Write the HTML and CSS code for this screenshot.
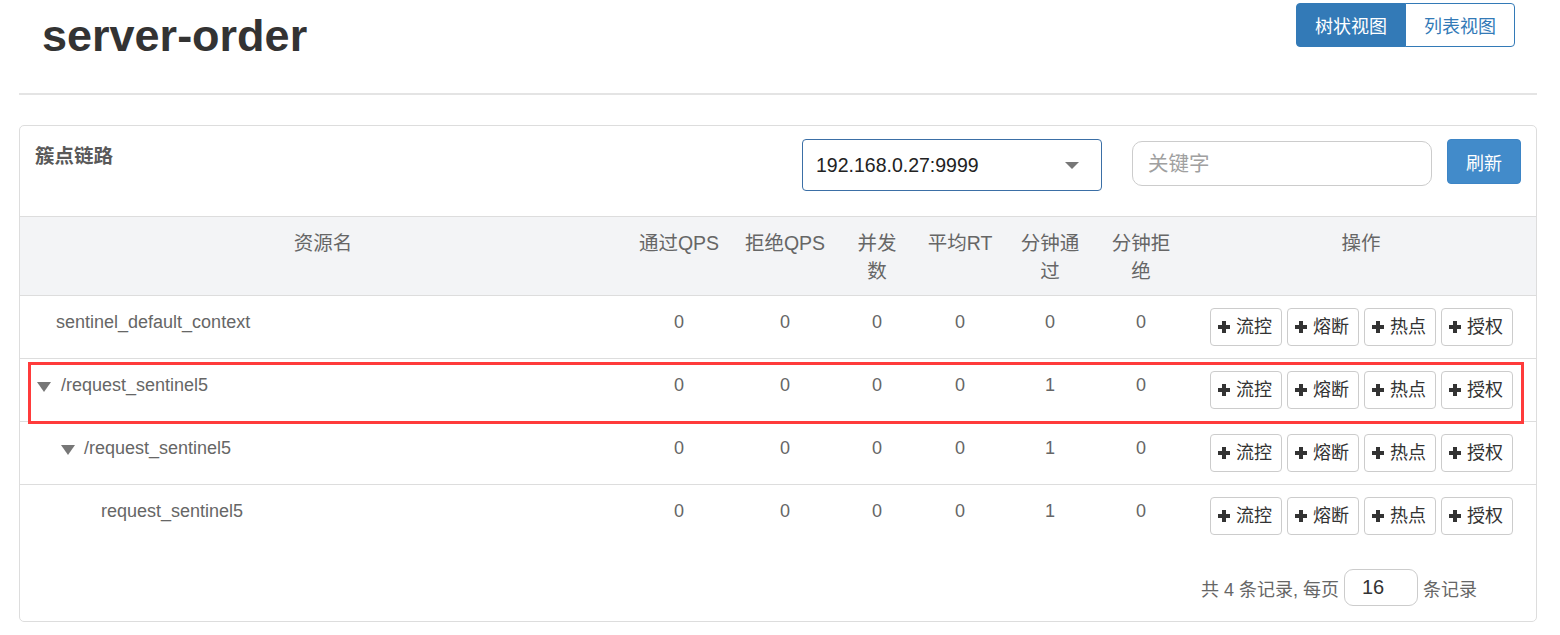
FILE: index.html
```html
<!DOCTYPE html>
<html lang="zh">
<head>
<meta charset="utf-8">
<title>server-order</title>
<link rel="stylesheet" href="styles.css">
</head>
<body>
<div class="page">
  <header class="top">
    <h1 class="app-title">server-order</h1>
    <div class="view-switch">
      <button class="view-btn active">树状视图</button>
      <button class="view-btn">列表视图</button>
    </div>
  </header>
  <div class="divider"></div>

  <section class="panel">
    <div class="panel-head">
      <div class="panel-title">簇点链路</div>
      <div class="machine-select">
        <span class="select-value">192.168.0.27:9999</span>
        <span class="caret"></span>
      </div>
      <input class="search" type="text" placeholder="关键字">
      <button class="refresh">刷新</button>
    </div>

    <table class="grid">
      <colgroup>
        <col class="c-name"><col class="c-pass"><col class="c-block"><col class="c-conc"><col class="c-rt"><col class="c-minp"><col class="c-minb"><col class="c-ops">
      </colgroup>
      <thead>
        <tr>
          <th>资源名</th>
          <th>通过QPS</th>
          <th>拒绝QPS</th>
          <th>并发<br>数</th>
          <th>平均RT</th>
          <th>分钟通<br>过</th>
          <th>分钟拒<br>绝</th>
          <th>操作</th>
        </tr>
      </thead>
      <tbody>
        <tr>
          <td class="name lvl-a">sentinel_default_context</td>
          <td>0</td><td>0</td><td>0</td><td>0</td><td>0</td><td>0</td>
          <td class="ops">
            <button class="op"><svg class="plus" viewBox="0 0 12 12"><rect x="4" y="0" width="4" height="12"/><rect x="0" y="4" width="12" height="4"/></svg>流控</button>
            <button class="op"><svg class="plus" viewBox="0 0 12 12"><rect x="4" y="0" width="4" height="12"/><rect x="0" y="4" width="12" height="4"/></svg>熔断</button>
            <button class="op"><svg class="plus" viewBox="0 0 12 12"><rect x="4" y="0" width="4" height="12"/><rect x="0" y="4" width="12" height="4"/></svg>热点</button>
            <button class="op"><svg class="plus" viewBox="0 0 12 12"><rect x="4" y="0" width="4" height="12"/><rect x="0" y="4" width="12" height="4"/></svg>授权</button>
          </td>
        </tr>
        <tr>
          <td class="name lvl-b"><span class="tri"></span>/request_sentinel5</td>
          <td>0</td><td>0</td><td>0</td><td>0</td><td>1</td><td>0</td>
          <td class="ops">
            <button class="op"><svg class="plus" viewBox="0 0 12 12"><rect x="4" y="0" width="4" height="12"/><rect x="0" y="4" width="12" height="4"/></svg>流控</button>
            <button class="op"><svg class="plus" viewBox="0 0 12 12"><rect x="4" y="0" width="4" height="12"/><rect x="0" y="4" width="12" height="4"/></svg>熔断</button>
            <button class="op"><svg class="plus" viewBox="0 0 12 12"><rect x="4" y="0" width="4" height="12"/><rect x="0" y="4" width="12" height="4"/></svg>热点</button>
            <button class="op"><svg class="plus" viewBox="0 0 12 12"><rect x="4" y="0" width="4" height="12"/><rect x="0" y="4" width="12" height="4"/></svg>授权</button>
          </td>
        </tr>
        <tr>
          <td class="name lvl-c"><span class="tri"></span>/request_sentinel5</td>
          <td>0</td><td>0</td><td>0</td><td>0</td><td>1</td><td>0</td>
          <td class="ops">
            <button class="op"><svg class="plus" viewBox="0 0 12 12"><rect x="4" y="0" width="4" height="12"/><rect x="0" y="4" width="12" height="4"/></svg>流控</button>
            <button class="op"><svg class="plus" viewBox="0 0 12 12"><rect x="4" y="0" width="4" height="12"/><rect x="0" y="4" width="12" height="4"/></svg>熔断</button>
            <button class="op"><svg class="plus" viewBox="0 0 12 12"><rect x="4" y="0" width="4" height="12"/><rect x="0" y="4" width="12" height="4"/></svg>热点</button>
            <button class="op"><svg class="plus" viewBox="0 0 12 12"><rect x="4" y="0" width="4" height="12"/><rect x="0" y="4" width="12" height="4"/></svg>授权</button>
          </td>
        </tr>
        <tr>
          <td class="name lvl-d">request_sentinel5</td>
          <td>0</td><td>0</td><td>0</td><td>0</td><td>1</td><td>0</td>
          <td class="ops">
            <button class="op"><svg class="plus" viewBox="0 0 12 12"><rect x="4" y="0" width="4" height="12"/><rect x="0" y="4" width="12" height="4"/></svg>流控</button>
            <button class="op"><svg class="plus" viewBox="0 0 12 12"><rect x="4" y="0" width="4" height="12"/><rect x="0" y="4" width="12" height="4"/></svg>熔断</button>
            <button class="op"><svg class="plus" viewBox="0 0 12 12"><rect x="4" y="0" width="4" height="12"/><rect x="0" y="4" width="12" height="4"/></svg>热点</button>
            <button class="op"><svg class="plus" viewBox="0 0 12 12"><rect x="4" y="0" width="4" height="12"/><rect x="0" y="4" width="12" height="4"/></svg>授权</button>
          </td>
        </tr>
      </tbody>
    </table>

    <div class="pager">
      <span>共 4 条记录, 每页</span>
      <input class="page-size" type="text" value="16">
      <span>条记录</span>
    </div>
  </section>

  <div class="highlight"></div>
</div>
</body>
</html>
```

FILE: styles.css
```css
* { box-sizing: border-box; }

html, body {
  margin: 0;
  padding: 0;
  background: #fff;
}

body {
  font-family: "Liberation Sans", "Noto Sans CJK SC", sans-serif;
  font-size: 18px;
  color: #333;
}

.page {
  position: relative;
  width: 1518px;
  margin-left: 19px;
}

.top {
  display: flex;
  justify-content: space-between;
  align-items: flex-start;
  height: 93px;
  padding: 0 22px 0 23px;
}

.app-title {
  margin: 11px 0 0 0;
  font-size: 45px;
  line-height: 49px;
  font-weight: bold;
  color: #333;
}

.view-switch {
  display: flex;
  margin-top: 3px;
}

.view-btn {
  height: 44px;
  width: 110px;
  padding: 0;
  font-family: inherit;
  font-size: 18px;
  color: #337ab7;
  background: #fff;
  border: 1px solid #337ab7;
  border-radius: 0 4px 4px 0;
  margin-left: -1px;
}

.view-btn.active {
  color: #fff;
  background: #337ab7;
  border-radius: 4px 0 0 4px;
  margin-left: 0;
}

.divider {
  height: 2px;
  background: #e4e4e4;
}

.panel {
  margin-top: 30px;
  border: 1px solid #dddddd;
  border-radius: 5px;
  height: 497px;
}

.panel-head {
  display: flex;
  align-items: flex-start;
  height: 90px;
  padding: 13px 15px 0 15px;
}

.panel-title {
  flex: 1;
  font-weight: bold;
  font-size: 19.5px;
  line-height: 28px;
  color: #595959;
  margin-top: 3px;
}

.machine-select {
  width: 300px;
  height: 52px;
  border: 1px solid #3b6fa6;
  border-radius: 4px;
  display: flex;
  align-items: center;
  justify-content: space-between;
  padding: 0 22px 0 13px;
  margin-right: 30px;
}

.select-value {
  font-size: 19.5px;
  color: #222;
}

.caret {
  width: 0;
  height: 0;
  border-left: 7px solid transparent;
  border-right: 7px solid transparent;
  border-top: 7px solid #777;
}

.search {
  width: 300px;
  height: 45px;
  margin-top: 2px;
  margin-right: 15px;
  border: 1px solid #cccccc;
  border-radius: 10px;
  padding: 0 15px;
  font-family: inherit;
  font-size: 20.5px;
  color: #333;
  outline: none;
}

.search::placeholder { color: #a0a0a0; }

.refresh {
  width: 74px;
  height: 45px;
  border: 1px solid #3d85c6;
  border-radius: 4px;
  background: #428bca;
  color: #fff;
  font-family: inherit;
  font-size: 18px;
  padding: 0;
}

.grid {
  width: 1516px;
  border-collapse: collapse;
  table-layout: fixed;
}

.c-name { width: 606px; }
.c-pass { width: 106px; }
.c-block { width: 106px; }
.c-conc { width: 78px; }
.c-rt { width: 88px; }
.c-minp { width: 92px; }
.c-minb { width: 90px; }
.c-ops { width: 350px; }

.grid th {
  background: #f3f4f6;
  border-top: 1px solid #dddddd;
  border-bottom: 1px solid #dddddd;
  font-weight: normal;
  color: #666;
  font-size: 19.5px;
  line-height: 28px;
  padding: 12px 0 10px;
  text-align: center;
  vertical-align: top;
  white-space: nowrap;
}

.grid td {
  padding: 12px 0;
  line-height: 28px;
  font-size: 18px;
  color: #666;
  text-align: center;
  vertical-align: top;
  border-bottom: 1px solid #dddddd;
  white-space: nowrap;
}

.grid tbody tr:last-child td { border-bottom: none; }

.grid td.name { text-align: left; }
.lvl-a { padding-left: 36px !important; }
.lvl-b { padding-left: 17px !important; }
.lvl-c { padding-left: 41px !important; }
.lvl-d { padding-left: 81px !important; }

.tri {
  display: inline-block;
  width: 0;
  height: 0;
  border-left: 7px solid transparent;
  border-right: 7px solid transparent;
  border-top: 10px solid #777;
  margin-right: 10px;
  vertical-align: -1px;
}

.lvl-c .tri { margin-right: 9px; }

.ops {
  font-size: 0 !important;
  line-height: 0 !important;
}

.op {
  display: inline-flex;
  align-items: center;
  justify-content: center;
  width: 72px;
  height: 38px;
  margin: 0 2.5px;
  padding: 0 1px 0 0;
  border: 1px solid #cccccc;
  border-radius: 4px;
  background: #fff;
  color: #333;
  font-family: inherit;
  font-size: 18px;
  line-height: 1;
}

.plus {
  flex-shrink: 0;
  width: 12px;
  height: 12px;
  fill: #333;
  margin-right: 6px;
}

.pager {
  display: flex;
  justify-content: flex-end;
  align-items: center;
  gap: 5px;
  margin-top: 22px;
  padding-right: 59px;
  color: #666;
  font-size: 18px;
}

.page-size {
  width: 74px;
  height: 37px;
  border: 1px solid #cccccc;
  border-radius: 9px;
  padding: 0 0 0 17px;
  font-family: inherit;
  font-size: 20px;
  color: #333;
  outline: none;
}

.highlight {
  position: absolute;
  left: 9px;
  top: 362px;
  width: 1496px;
  height: 62px;
  border: 3px solid #ff3b3b;
  pointer-events: none;
}
```
